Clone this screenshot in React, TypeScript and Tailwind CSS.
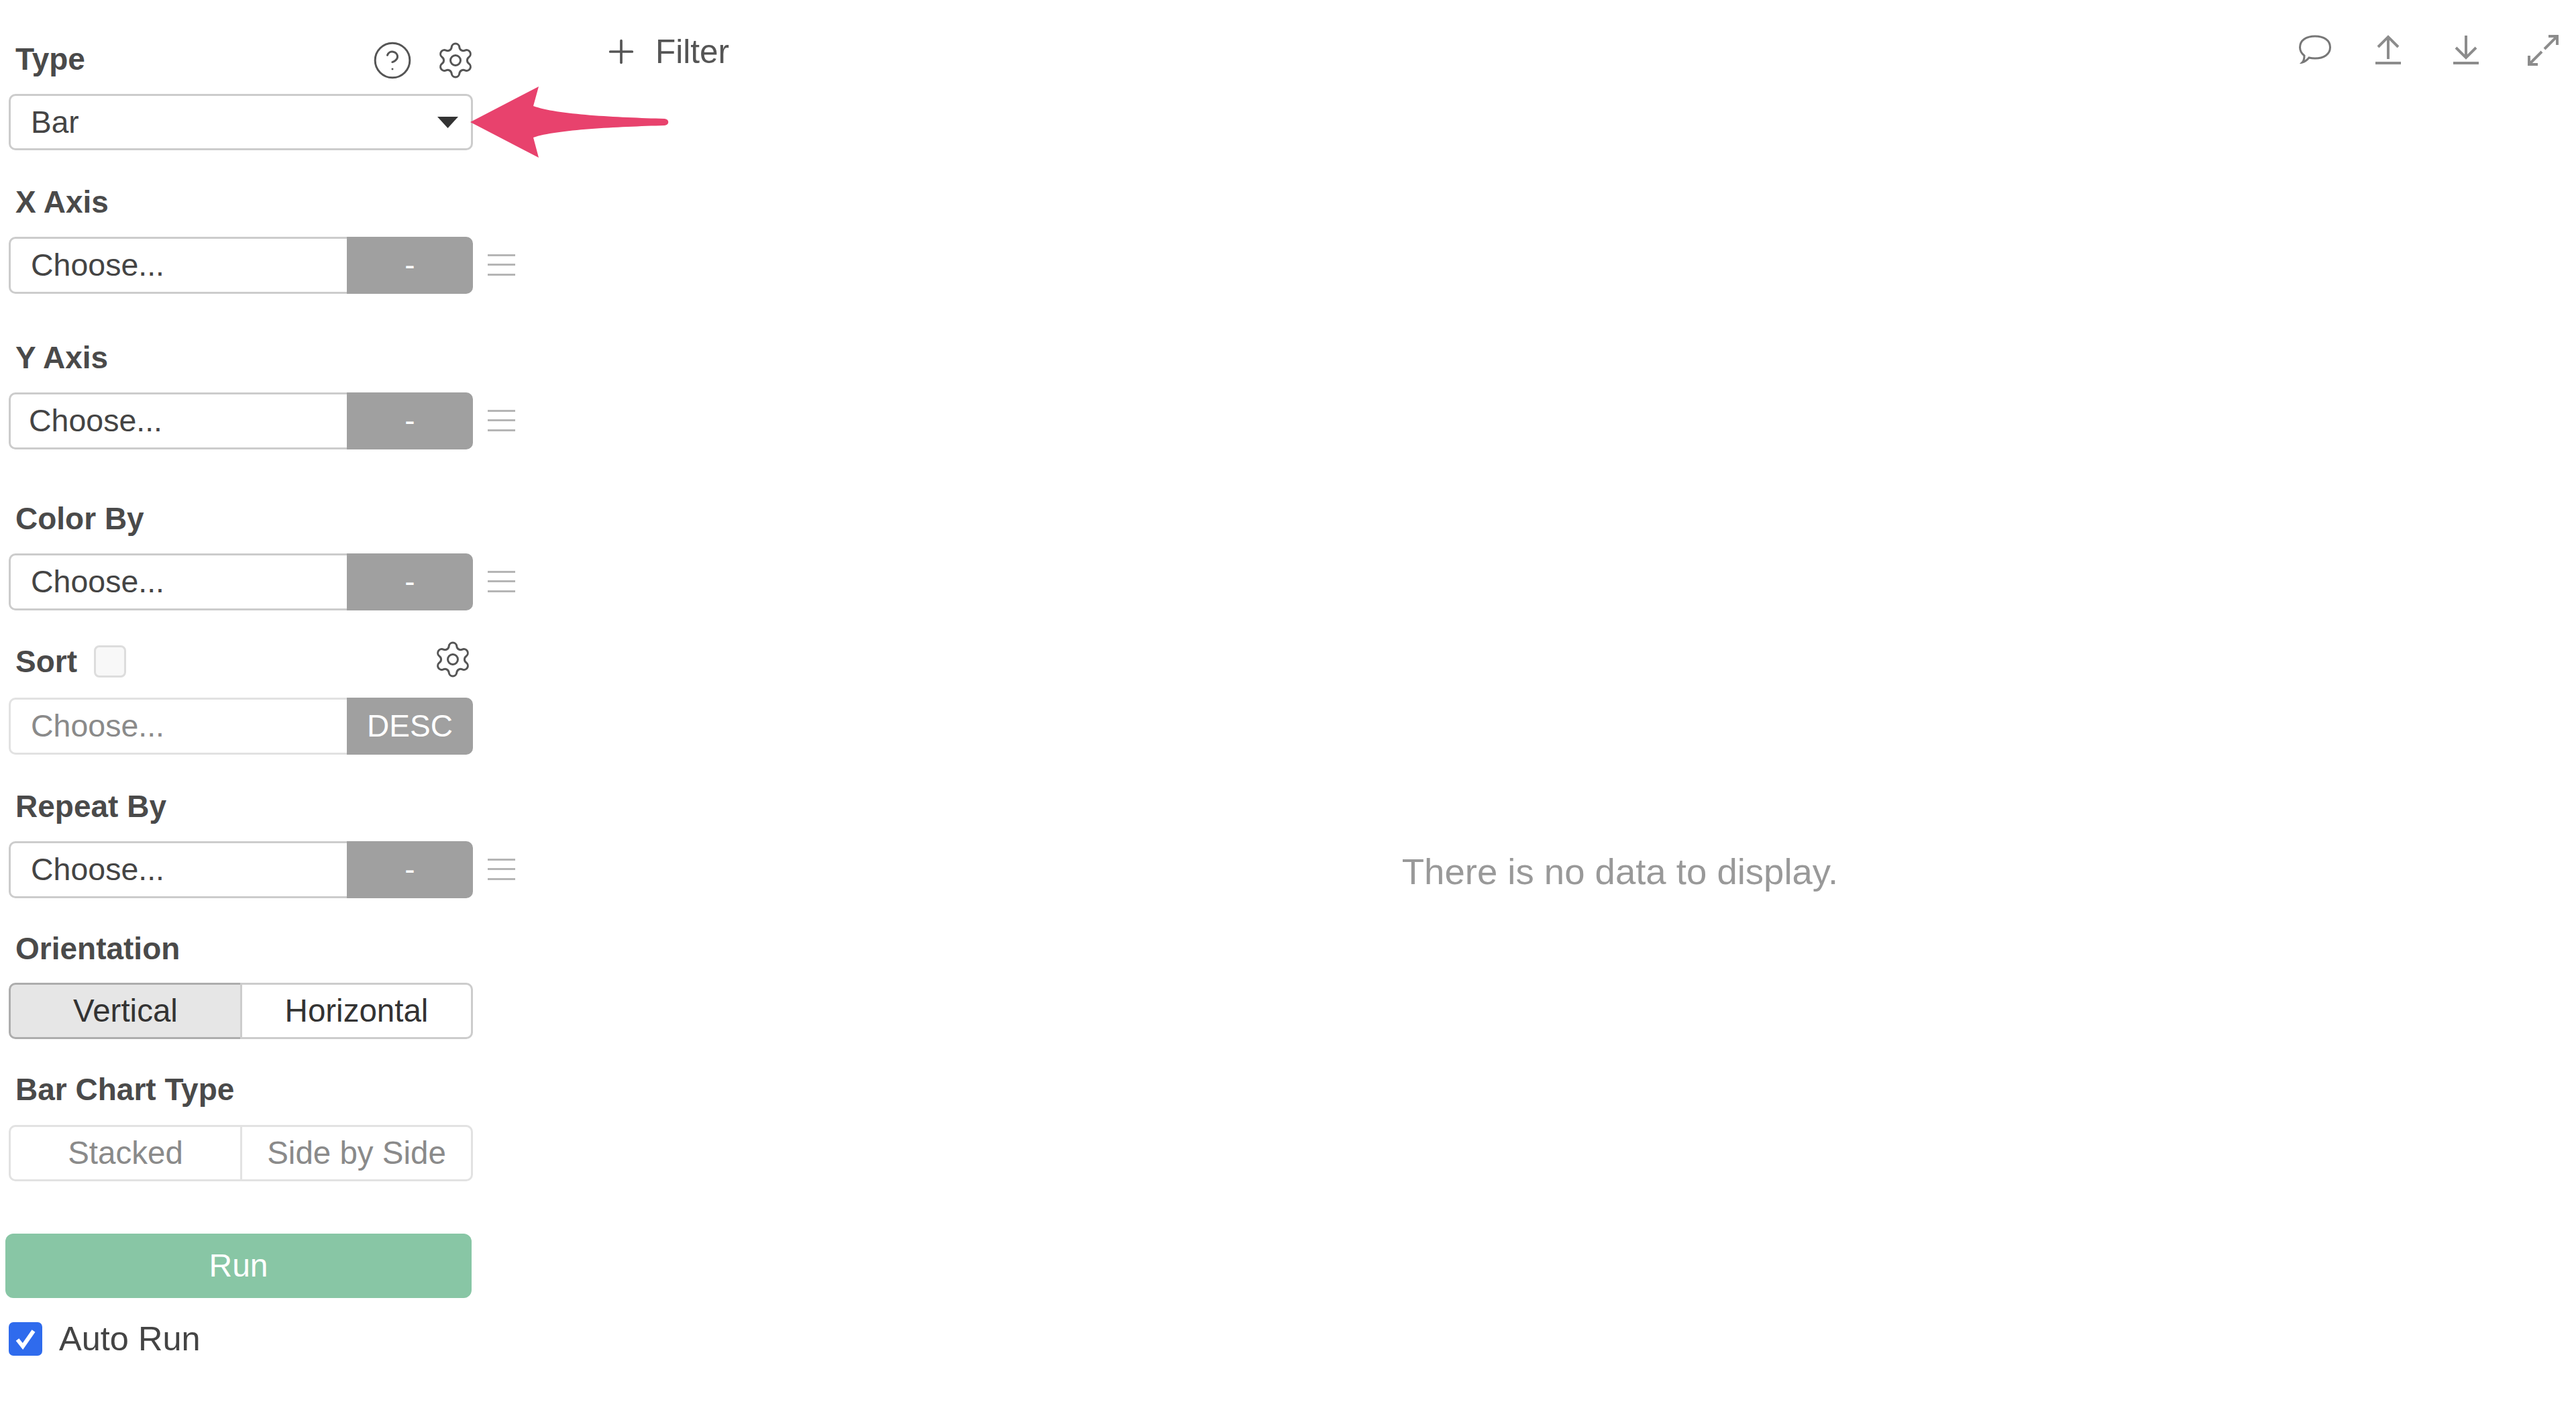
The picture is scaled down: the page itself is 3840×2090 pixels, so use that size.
import React from 'react';
import { CircleHelp, Settings, Plus } from 'lucide-react';

const FieldLabel = ({ label, className = '' }: { label: string; className?: string }) => (
  <div className={`h-[52px] flex items-center pl-[10px] font-bold text-[46px] text-[#4a4a4a] ${className}`}>{label}</div>
);

const Hamburger = () => (
  <div className="ml-[22px] w-[41px] h-[32px] flex flex-col justify-between -translate-y-[1px]">
    <div className="h-[3px] bg-[#b5b5b5]"></div>
    <div className="h-[3px] bg-[#b5b5b5]"></div>
    <div className="h-[3px] bg-[#b5b5b5]"></div>
  </div>
);

const ChooseRow = ({ button = '-', muted = false, textPad = 'pl-[30px]', menu = true }: { button?: string; muted?: boolean; textPad?: string; menu?: boolean }) => (
  <div className="flex items-center">
    <div className={`w-[504px] h-[85px] flex items-center border-[3px] border-r-0 rounded-l-[10px] ${textPad} text-[46.500px] ${muted ? 'border-[#e2e2e2] text-[#8a8a8a]' : 'border-[#cccccc] text-[#444444]'}`}>
      Choose...
    </div>
    <div className="w-[188px] h-[85px] flex items-center justify-center bg-[#a0a0a0] rounded-r-[10px] text-[46px] text-white">{button}</div>
    {menu && <Hamburger />}
  </div>
);

const Toggle = ({ left, right, active = false, muted = false }: { left: string; right: string; active?: boolean; muted?: boolean }) => (
  <div className="flex w-[692px] h-[84px] text-[47.500px]">
    <div className={`w-[345px] flex items-center justify-center border-[3px] border-r-0 rounded-l-[10px] ${active ? 'bg-[#e6e6e6] border-[#adadad] text-[#333333]' : 'border-[#e2e2e2] text-[#8a8a8a]'}`}>{left}</div>
    <div className={`flex-1 flex items-center justify-center border-[3px] rounded-r-[10px] ${muted ? 'border-[#e2e2e2] text-[#8a8a8a]' : 'border-[#cccccc] text-[#333333]'}`}>{right}</div>
  </div>
);

const Sidebar = () => (
  <div className="w-[780px] shrink-0 pt-[62px] pl-[13px]">
    <div className="w-[692px] h-[52px] flex items-center justify-between">
      <FieldLabel label="Type" />
      <div className="flex items-center gap-[33px] -mr-[4px] translate-y-[2px]">
        <CircleHelp className="w-[62px] h-[62px] text-[#555555]" strokeWidth={1.15} />
        <Settings className="w-[60px] h-[60px] text-[#555555]" strokeWidth={1.2} />
      </div>
    </div>
    <div className="mt-[26px] w-[692px] h-[84px] flex items-center justify-between border-[3px] border-[#cccccc] rounded-[10px] pl-[30px] pr-[19px] text-[46px] text-[#444444]">
      <span>Bar</span>
      <svg width="31" height="17" viewBox="0 0 31 17"><polygon points="0,0 31,0 15.5,17" fill="#333333" /></svg>
    </div>

    <FieldLabel label="X Axis" className="mt-[51px] mb-[26px]" />
    <ChooseRow />

    <FieldLabel label="Y Axis" className="mt-[69px] mb-[26px]" />
    <ChooseRow textPad="pl-[27px]" />

    <FieldLabel label="Color By" className="mt-[77px] mb-[26px]" />
    <ChooseRow />

    <div className="mt-[50px] mb-[28px] w-[692px] h-[52px] flex items-center">
      <FieldLabel label="Sort" />
      <div className="ml-[25px] w-[48px] h-[48px] border-[3px] border-[#dddddd] rounded-[8px] bg-[#f8f8f8]"></div>
      <Settings className="ml-auto -translate-y-[3px] w-[60px] h-[60px] text-[#555555]" strokeWidth={1.2} />
    </div>
    <ChooseRow button="DESC" muted menu={false} />

    <FieldLabel label="Repeat By" className="mt-[51px] mb-[26px]" />
    <ChooseRow />

    <FieldLabel label="Orientation" className="mt-[49px] mb-[25px]" />
    <Toggle left="Vertical" right="Horizontal" active />

    <FieldLabel label="Bar Chart Type" className="mt-[49px] mb-[27px]" />
    <Toggle left="Stacked" right="Side by Side" muted />

    <div className="mt-[78px] -ml-[5px] w-[695px] h-[96px] flex items-center justify-center bg-[#88c6a5] rounded-[12px] text-[48px] text-white">Run</div>

    <div className="mt-[36px] h-[50px] flex items-center">
      <div className="w-[50px] h-[50px] flex items-center justify-center bg-[#2f6bed] rounded-[7px]">
        <svg width="34" height="34" viewBox="0 0 34 34" fill="none"><path d="M5 18l8 10L29 5" stroke="white" strokeWidth="6" /></svg>
      </div>
      <span className="ml-[25px] text-[50.500px] text-[#444444]">Auto Run</span>
    </div>
  </div>
);

const Toolbar = () => (
  <div className="h-[150px] flex items-start justify-between pr-[26px]">
    <div className="mt-[40px] ml-[118px] flex items-center text-[#555555] text-[49.500px]">
      <Plus className="w-[56px] h-[56px]" strokeWidth={1.6} />
      <span className="ml-[23px]">Filter</span>
    </div>
    <div className="mt-[52px] flex items-start text-[#8c8c8c]">
      {/* comment */}
      <svg width="48" height="43" viewBox="0 0 48 43" fill="none" stroke="#777777" strokeWidth="3"><path d="M8 31C3 27 1.500 23 1.500 18.500 1.500 8 11 2 24 2s22.500 6 22.500 16.500S37 35 24 35c-3 0-6-.3-9-1-2.500 3-6 6-10 7 2-2 3-6 3-10z" /></svg>
      {/* upload */}
      <svg className="ml-[66px]" width="38" height="44" viewBox="0 0 38 44" fill="none" stroke="currentColor" strokeWidth="4"><path d="M19 36V3M4 18L19 3l15 15M0 42h38" /></svg>
      {/* download */}
      <svg className="ml-[78px]" width="38" height="44" viewBox="0 0 38 44" fill="none" stroke="currentColor" strokeWidth="4"><path d="M19 1v33M4 19l15 15 15-15M0 42h38" /></svg>
      {/* expand */}
      <svg className="ml-[73px]" width="46" height="46" viewBox="0 0 46 46" fill="none" stroke="currentColor" strokeWidth="4"><path d="M25 21L44 2M31 2h13v13M21 25L2 44M2 31v13h13" /></svg>
    </div>
  </div>
);

export default function App() {
  return (
    <div className="relative w-full h-[2090px] flex bg-white overflow-hidden font-['Liberation_Sans',Arial,sans-serif]">
      <Sidebar />
      <div className="flex-1 flex flex-col">
        <Toolbar />
        <div className="flex-1 pt-[360px] flex items-center justify-center ml-[210px]">
          <span className="text-[54.500px] text-[#999999]">There is no data to display.</span>
        </div>
      </div>
      {/* red annotation arrow over the Type select */}
      <svg className="absolute left-[700px] top-[129px]" width="298" height="106" viewBox="0 0 298 106">
        <path d="M1 53L103 0 95 29C130 42 220 46 291 48 298 49 298 57 291 58 220 60 130 64 95 76L103 106Z" fill="#e8426d" />
      </svg>
    </div>
  );
}
